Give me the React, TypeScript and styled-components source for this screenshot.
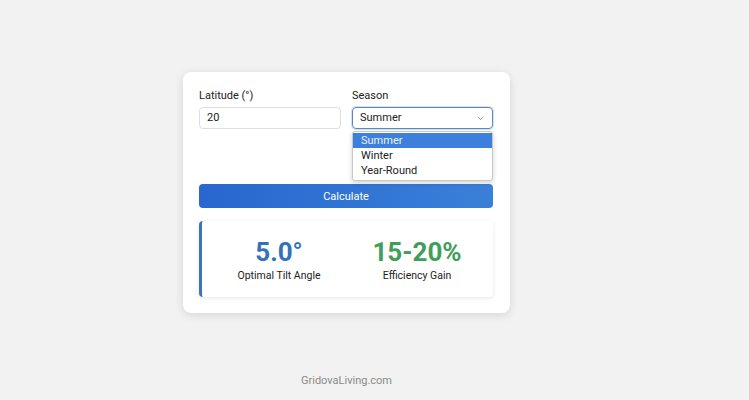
import React from "react";
import styled, { createGlobalStyle } from "styled-components";

const Global = createGlobalStyle`
  html, body { margin: 0; padding: 0; background: #f2f2f2; }
  body { font-family: Roboto, "Noto Sans", Arial, sans-serif; }
  #root { width: 749px; height: 400px; }
`;

const Page = styled.div`
  width: 749px;
  height: 400px;
  box-sizing: border-box;
  padding-top: 72px;
  display: flex;
  flex-direction: column;
  align-items: flex-start;
  padding-left: 183px;
  position: relative;
`;

const Card = styled.div`
  width: 327px;
  box-sizing: border-box;
  background: #fff;
  border-radius: 8px;
  box-shadow: 0 2px 10px rgba(0, 0, 0, 0.12);
  padding: 17px 17px 16px 16px;
`;

const Fields = styled.div`
  display: grid;
  grid-template-columns: 142px 141px;
  column-gap: 11px;
  margin-bottom: 55px;
`;

const Field = styled.div`
  display: flex;
  flex-direction: column;
  position: relative;
`;

const Label = styled.label`
  font-size: 11px;
  color: #222;
  height: 14px;
  line-height: 14px;
  margin-bottom: 4px;
`;

const Input = styled.div`
  height: 22px;
  box-sizing: border-box;
  border: 1px solid #dedede;
  border-radius: 4px;
  padding: 0 7px;
  font-size: 11px;
  line-height: 20px;
  color: #222;
`;

const Select = styled(Input)`
  border: 1px solid #5a88c4;
  box-shadow: 0 0 0 1px rgba(90, 136, 196, 0.25);
  display: flex;
  align-items: center;
  justify-content: space-between;
`;

const Menu = styled.div`
  position: absolute;
  top: 42px;
  left: 0;
  width: 141px;
  box-sizing: border-box;
  background: #fff;
  border: 1px solid #c8c8c8;
  border-radius: 3px;
  box-shadow: 0 2px 5px rgba(0, 0, 0, 0.18);
  padding: 1px 0 2px;
`;

const Option = styled.div<{ $active?: boolean }>`
  font-size: 11px;
  height: 15px;
  line-height: 15px;
  padding: 0 8px;
  color: ${(p) => (p.$active ? "#eaf2ff" : "#222")};
  background: ${(p) => (p.$active ? "#3d7fdd" : "transparent")};
`;

const Button = styled.button`
  display: block;
  width: 294px;
  height: 24px;
  border: none;
  border-radius: 4px;
  background: linear-gradient(90deg, #2767cf, #3a80d8);
  color: #fff;
  font-family: Roboto, Arial, sans-serif;
  font-size: 11px;
  padding: 0;
  margin-bottom: 13px;
`;

const Result = styled.div`
  width: 294px;
  height: 76px;
  box-sizing: border-box;
  border-left: 3px solid #3a74c0;
  border-radius: 4px;
  box-shadow: 0 1px 4px rgba(0, 0, 0, 0.1);
  display: grid;
  grid-template-columns: 1fr 1fr;
  align-items: center;
  padding: 0 7px 0 8px;
`;

const Stat = styled.div`
  display: flex;
  flex-direction: column;
  align-items: center;
`;

const Value = styled.div<{ $color: string }>`
  font-size: 26px;
  font-weight: 700;
  color: ${(p) => p.$color};
  line-height: 30px;
  margin-bottom: 2px;
`;

const Caption = styled.div`
  font-size: 10.5px;
  color: #222;
`;

const Footer = styled.div`
  position: absolute;
  top: 374px;
  left: 0;
  width: 693px;
  text-align: center;
  font-size: 11px;
  color: #8a8a8a;
`;

export default function App() {
  return (
    <>
      <Global />
      <Page>
        <Card>
          <Fields>
            <Field>
              <Label>Latitude (°)</Label>
              <Input>20</Input>
            </Field>
            <Field>
              <Label>Season</Label>
              <Select>
                <span>Summer</span>
                <svg width="9" height="9" viewBox="0 0 24 24" fill="none" stroke="#777" strokeWidth="2" strokeLinecap="round" strokeLinejoin="round">
                  <path d="M6 9l6 6 6-6" />
                </svg>
              </Select>
              <Menu>
                <Option $active>Summer</Option>
                <Option>Winter</Option>
                <Option>Year-Round</Option>
              </Menu>
            </Field>
          </Fields>
          <Button>Calculate</Button>
          <Result>
            <Stat>
              <Value $color="#3472b8">5.0°</Value>
              <Caption>Optimal Tilt Angle</Caption>
            </Stat>
            <Stat>
              <Value $color="#3f9e5a">15-20%</Value>
              <Caption>Efficiency Gain</Caption>
            </Stat>
          </Result>
        </Card>
        <Footer>GridovaLiving.com</Footer>
      </Page>
    </>
  );
}
